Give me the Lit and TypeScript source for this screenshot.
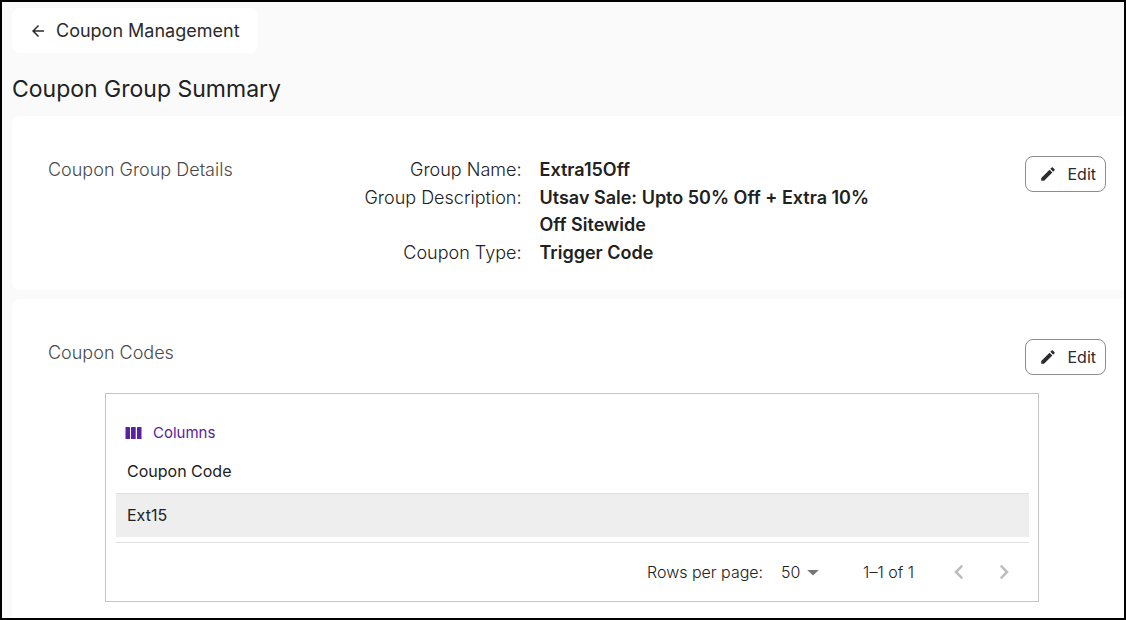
import { LitElement, html, css, svg } from "lit";
import { customElement, property, state } from "lit/decorators.js";

const base = css`
  :host {
    box-sizing: border-box;
    font-family: "Inter", "Liberation Sans", sans-serif;
    color: #212121;
  }
  *, *::before, *::after {
    box-sizing: inherit;
  }
  svg {
    display: block;
    fill: currentColor;
    flex: none;
  }
  button {
    font: inherit;
    color: inherit;
    margin: 0;
    cursor: pointer;
  }
`;

const icons = {
  back: svg`<path d="M20 11H7.83l5.59-5.59L12 4l-8 8 8 8 1.41-1.41L7.83 13H20v-2z" />`,
  pencil: svg`<path d="M3 17.25V21h3.75L17.81 9.94l-3.75-3.75L3 17.25zM20.71 7.04a1 1 0 0 0 0-1.41l-2.34-2.34a1 1 0 0 0-1.41 0l-1.83 1.83 3.75 3.75 1.83-1.83z" />`,
  columns: svg`<rect x="0.5" y="0" width="4.5" height="12" rx="0.6" /><rect x="6" y="0" width="4.7" height="12" rx="0.6" /><rect x="12" y="0" width="4.5" height="12" rx="0.6" />`,
  previous: svg`<path d="M15 6.2L9.2 12l5.800 5.800" fill="none" stroke="currentColor" stroke-width="2.300" />`,
  next: svg`<path d="M9 6.2l5.800 5.800L9 17.800" fill="none" stroke="currentColor" stroke-width="2.300" />`,
  caret: svg`<path d="M6.200 10h11.600L12 15.600z" />`,
};

@customElement("edit-button")
class EditButton extends LitElement {
  @property() label = "";

  static styles = [
    base,
    css`
      :host {
        display: block;
        flex: none;
      }
      .edit {
        display: flex;
        align-items: center;
        gap: 10px;
        height: 36px;
        padding: 0 9px 0 13px;
        border: 1px solid #8c8c8c;
        border-radius: 8px;
        background: #fff;
        color: #2b2b30;
        font-size: 16px;
        line-height: 24px;
      }
    `,
  ];

  render() {
    return html`<button class="edit" type="button" title=${this.label}>
      <svg width="18" height="18" viewBox="0 0 24 24" aria-hidden="true">${icons.pencil}</svg>
      Edit
    </button>`;
  }
}

@customElement("coupon-table")
class CouponTable extends LitElement {
  @property({ attribute: false }) codes: string[] = [];
  @state() private pageSize = 50;

  static styles = [
    base,
    css`
      :host {
        display: block;
        padding: 23px 9px 8px 10px;
        border: 1px solid #c4c4c4;
        font-size: 16px;
        line-height: 20px;
      }
      .columns {
        display: flex;
        align-items: center;
        gap: 11px;
        height: 32px;
        padding: 0 9px;
        border: 0;
        background: none;
        color: #5b21a0;
        font-size: 15px;
      }
      .grid {
        width: 100%;
        border-collapse: collapse;
      }
      .head {
        height: 44px;
        padding: 0 11px;
        border-bottom: 1px solid #e0e0e0;
        text-align: left;
        font-weight: 400;
      }
      .cell {
        height: 44px;
        padding: 0 11px;
        background: #eee;
      }
      .footer {
        display: flex;
        align-items: center;
        justify-content: flex-end;
        margin-top: 5px;
        padding: 7px 3px 0 0;
        border-top: 1px solid #e0e0e0;
        height: 51px;
        font-weight: 300;
      }
      .size {
        position: relative;
        display: flex;
        align-items: center;
        margin: 0 38px 0 18px;
      }
      .select {
        appearance: none;
        border: 0;
        margin: 0;
        padding: 0 24px 0 0;
        background: none;
        color: inherit;
        font: inherit;
      }
      .caret {
        position: absolute;
        right: 0;
        color: #757575;
        pointer-events: none;
      }
      .range {
        margin-right: 22px;
      }
      .step {
        display: grid;
        place-items: center;
        width: 45px;
        height: 44px;
        padding: 0;
        border: 0;
        background: none;
        color: #bdbdbd;
      }
    `,
  ];

  render() {
    return html`
      <button class="columns" type="button">
        <svg width="17" height="12" viewBox="0 0 17 12" aria-hidden="true">${icons.columns}</svg>
        Columns
      </button>
      <table class="grid">
        <thead>
          <tr><th class="head" scope="col">Coupon Code</th></tr>
        </thead>
        <tbody>
          ${this.codes.map((code) => html`<tr><td class="cell">${code}</td></tr>`)}
        </tbody>
      </table>
      <div class="footer">
        <label for="page-size">Rows per page:</label>
        <span class="size">
          <select
            class="select"
            id="page-size"
            @change=${(e: Event) => (this.pageSize = Number((e.target as HTMLSelectElement).value))}
          >
            <option value="50" ?selected=${this.pageSize === 50}>50</option>
          </select>
          <svg class="caret" width="24" height="24" viewBox="0 0 24 24" aria-hidden="true">${icons.caret}</svg>
        </span>
        <span class="range">1–${this.codes.length} of ${this.codes.length}</span>
        <button class="step" type="button" disabled aria-label="Previous page">
          <svg width="26" height="26" viewBox="0 0 24 24">${icons.previous}</svg>
        </button>
        <button class="step" type="button" disabled aria-label="Next page">
          <svg width="26" height="26" viewBox="0 0 24 24">${icons.next}</svg>
        </button>
      </div>
    `;
  }
}

@customElement("app-root")
class AppRoot extends LitElement {
  private details = [
    ["Group Name:", "Extra15Off"],
    ["Group Description:", "Utsav Sale: Upto 50% Off + Extra 10% Off Sitewide"],
    ["Coupon Type:", "Trigger Code"],
  ];

  static styles = [
    base,
    css`
      :host {
        display: flex;
        flex-direction: column;
        min-height: 100vh;
        padding: 6px 0 0 10px;
        border: 2px solid #000;
        background: #fafafa;
      }
      .back {
        display: flex;
        align-items: center;
        align-self: flex-start;
        gap: 9px;
        padding: 9px 18px 9px 17px;
        border-radius: 8px;
        background: #fff;
        color: #2b2b2b;
        font-size: 18px;
        line-height: 27px;
        text-decoration: none;
      }
      .title {
        margin: 20px 0 11px;
        font-size: 23px;
        line-height: 32px;
        font-weight: 400;
      }
      .card {
        padding: 40px 18px 16px 36px;
        border-radius: 8px 0 0 8px;
        background: #fff;
      }
      .card + .card {
        flex: 1;
        margin-top: 9px;
        border-radius: 8px 0 0 0;
      }
      .row {
        display: grid;
        grid-template-columns: 25% 1fr auto;
        align-items: start;
      }
      .name {
        margin: 0;
        color: #4a4a4a;
        font-size: 18px;
        line-height: 27px;
        font-weight: 300;
      }
      .edit {
        grid-column: 3;
      }
      .details {
        display: grid;
        grid-template-columns: 209px minmax(0, 350px);
        gap: 1px 18px;
        margin: 0 0 8px;
        font-size: 18px;
        line-height: 27px;
      }
      .term {
        text-align: right;
        font-weight: 300;
      }
      .value {
        margin: 0;
        font-weight: 600;
      }
      .table {
        margin: 18px 67px 0 57px;
      }
    `,
  ];

  render() {
    return html`
      <a class="back" href="#">
        <svg width="18" height="18" viewBox="0 0 24 24" aria-hidden="true">${icons.back}</svg>
        Coupon Management
      </a>
      <h1 class="title">Coupon Group Summary</h1>
      <section class="card">
        <div class="row">
          <h2 class="name">Coupon Group Details</h2>
          <dl class="details">
            ${this.details.map(
              ([term, value]) => html`<dt class="term">${term}</dt><dd class="value">${value}</dd>`
            )}
          </dl>
          <edit-button class="edit" label="Edit group details"></edit-button>
        </div>
      </section>
      <section class="card">
        <div class="row">
          <h2 class="name">Coupon Codes</h2>
          <edit-button class="edit" label="Edit coupon codes"></edit-button>
        </div>
        <coupon-table class="table" .codes=${["Ext15"]}></coupon-table>
      </section>
    `;
  }
}
